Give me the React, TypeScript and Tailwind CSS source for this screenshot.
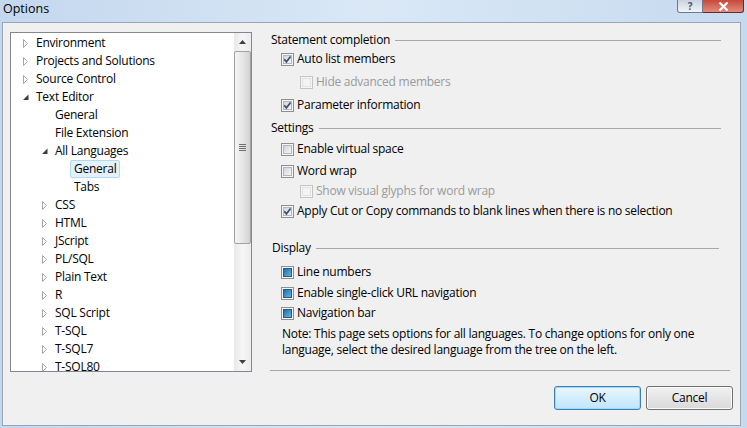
import React from "react";

type Node = { t: string; l: number; a?: "c" | "e"; sel?: boolean };

const tree: Node[] = [
  { t: "Environment", l: 0, a: "c" },
  { t: "Projects and Solutions", l: 0, a: "c" },
  { t: "Source Control", l: 0, a: "c" },
  { t: "Text Editor", l: 0, a: "e" },
  { t: "General", l: 1 },
  { t: "File Extension", l: 1 },
  { t: "All Languages", l: 1, a: "e" },
  { t: "General", l: 2, sel: true },
  { t: "Tabs", l: 2 },
  { t: "CSS", l: 1, a: "c" },
  { t: "HTML", l: 1, a: "c" },
  { t: "JScript", l: 1, a: "c" },
  { t: "PL/SQL", l: 1, a: "c" },
  { t: "Plain Text", l: 1, a: "c" },
  { t: "R", l: 1, a: "c" },
  { t: "SQL Script", l: 1, a: "c" },
  { t: "T-SQL", l: 1, a: "c" },
  { t: "T-SQL7", l: 1, a: "c" },
  { t: "T-SQL80", l: 1, a: "c" },
];

const padByLevel = ["pl-[12px]", "pl-[31px]", "pl-[50px]"];

function Arrow({ kind }: { kind?: "c" | "e" }) {
  if (kind === "c")
    return (
      <svg width="13" height="9" viewBox="0 0 13 9" className="shrink-0">
        <path d="M0.5 0.5 L4.5 4.5 L0.5 8.5 Z" fill="#fff" stroke="#a6a6a6" strokeWidth="1" />
      </svg>
    );
  if (kind === "e")
    return (
      <svg width="13" height="9" viewBox="0 0 13 9" className="shrink-0">
        <path d="M5.5 1.5 L5.5 7 L0 7 Z" fill="#3c3c3c" />
      </svg>
    );
  return <span className="w-[13px] shrink-0" />;
}

type CbKind = "checked" | "unchecked" | "disabled" | "indet";

function Checkbox({ kind }: { kind: CbKind }) {
  const id = React.useId().replace(/:/g, "");
  const disabled = kind === "disabled";
  return (
    <svg width="13" height="13" viewBox="0 0 13 13" className="shrink-0">
      <defs>
        <linearGradient id={"g" + id} x1="0" y1="0" x2="1" y2="1">
          <stop offset="0" stopColor="#cfd3d8" />
          <stop offset="1" stopColor="#f8f8f8" />
        </linearGradient>
        <linearGradient id={"b" + id} x1="0" y1="0" x2="1" y2="1">
          <stop offset="0" stopColor="#1d6aa5" />
          <stop offset="1" stopColor="#6bb8e4" />
        </linearGradient>
      </defs>
      <rect x="0.5" y="0.5" width="12" height="12" fill="#f6f6f6" stroke={disabled ? "#c4c4c4" : "#8e8f8f"} />
      {kind === "indet" ? (
        <rect x="2.5" y="2.5" width="8" height="8" fill={`url(#b${id})`} stroke="#1f5d8e" />
      ) : (
        <rect
          x="2.5"
          y="2.5"
          width="8"
          height="8"
          fill={disabled ? "#f4f4f4" : `url(#g${id})`}
          stroke={disabled ? "#e1e1e1" : "#b3b7bc"}
        />
      )}
      {kind === "checked" && (
        <path d="M3.3 6.3 L5.4 8.8 L9.6 3.4" fill="none" stroke="#3a4d7a" strokeWidth="1.7" />
      )}
    </svg>
  );
}

function Header({ text, extra }: { text: string; extra?: string }) {
  return (
    <div className={"flex h-[18px] items-center " + (extra ?? "")}>
      <span className="text-black">{text}</span>
      <div className="ml-[5px] h-px flex-1 bg-[#a8a8a8]" />
    </div>
  );
}

function CbRow({
  text,
  kind,
  indent,
  mt,
}: {
  text: string;
  kind: CbKind;
  indent?: boolean;
  mt: string;
}) {
  return (
    <div className={"flex h-[18px] items-center gap-[3px] " + (indent ? "pl-[30px] " : "pl-[11px] ") + mt}>
      <Checkbox kind={kind} />
      <span className={kind === "disabled" ? "text-[#9a9a9a]" : "text-black"}>{text}</span>
    </div>
  );
}

function Scrollbar() {
  return (
    <div className="flex h-full w-[17px] shrink-0 flex-col bg-gradient-to-r from-[#e9e9e9] via-[#f6f6f6] to-[#ececec]">
      <div className="flex h-[17px] items-center justify-center pt-[1px]">
        <svg width="7" height="4" viewBox="0 0 7 4">
          <path d="M3.5 0 L7 4 L0 4 Z" fill="#404040" />
        </svg>
      </div>
      <div className="mt-[1px] flex h-[193px] items-center justify-center rounded-[2px] border border-[#a2a2a2] bg-gradient-to-r from-[#f5f5f5] via-[#e6e6e6] to-[#d2d2d2]">
        <div className="flex flex-col gap-[1px]">
          <div className="h-px w-[7px] bg-[#6f6f6f]" />
          <div className="h-px w-[7px] bg-[#6f6f6f]" />
          <div className="h-px w-[7px] bg-[#6f6f6f]" />
          <div className="h-px w-[7px] bg-[#6f6f6f]" />
        </div>
      </div>
      <div className="flex-1" />
      <div className="flex h-[17px] items-center justify-center pb-[1px]">
        <svg width="7" height="4" viewBox="0 0 7 4">
          <path d="M0 0 L7 0 L3.5 4 Z" fill="#404040" />
        </svg>
      </div>
    </div>
  );
}

export default function App() {
  return (
    <div
      className="flex h-[428px] w-[747px] flex-col overflow-hidden bg-gradient-to-r from-[#c3d7ee] via-[#dae8f6] to-[#c6daef] text-[12px] leading-[16px] tracking-[-0.25px] text-black"
      style={{ fontFamily: '"Segoe UI", "Open Sans", "Noto Sans", sans-serif' }}
    >
      {/* Title bar */}
      <div className="flex h-[22px] shrink-0 items-start justify-between">
        <span className="pl-[3px] pt-[1px] text-[12.5px] leading-[16px] tracking-normal text-black">Options</span>
        <div className="mr-[3px] flex">
          <div className="flex h-[13px] w-[26px] items-center justify-center rounded-bl-[3px] border border-t-0 border-[#6d7b8c] bg-gradient-to-b from-[#c9d3de] to-[#f1f4f8] text-[10px] font-bold leading-[11px] text-[#4a5666]">
            ?
          </div>
          <div className="flex h-[13px] w-[41px] items-end justify-center rounded-br-[3px] border border-l-0 border-t-0 border-[#6b2b25] bg-gradient-to-b from-[#c5483c] to-[#e28a7a]">
            <svg width="11" height="9" viewBox="0 0 11 9" className="mb-[1px]">
              <path d="M1.5 0.5 L9.5 8.5 M9.5 0.5 L1.5 8.5" stroke="#fff" strokeWidth="2.2" />
            </svg>
          </div>
        </div>
      </div>

      {/* Client */}
      <div className="ml-[2px] flex h-[404px] w-[739px] shrink-0 border border-[#9aa6b4] bg-[#f0f0f0]">
        {/* Tree */}
        <div className="ml-[7px] mt-[9px] flex h-[340px] w-[242px] shrink-0 border border-[#828790] bg-white">
          <div className="flex-1 overflow-hidden pt-[1px]">
            {tree.map((n, i) => (
              <div key={i} className={"flex h-[18px] items-center " + padByLevel[n.l]}>
                <Arrow kind={n.a} />
                {n.sel ? (
                  <span className="-ml-[4px] flex h-[18px] items-center rounded-[2px] border border-[#b0daf4] bg-[#e2f1fb] px-[3px]">
                    {n.t}
                  </span>
                ) : (
                  <span className="whitespace-nowrap">{n.t}</span>
                )}
              </div>
            ))}
          </div>
          <Scrollbar />
        </div>

        {/* Right column */}
        <div className="ml-[18px] flex w-[463px] shrink-0 flex-col pt-[8px]">
          <div className="pr-[12px]">
            <Header text="Statement completion" extra="pl-[1px]" />
            <CbRow text="Auto list members" kind="checked" mt="mt-[1px]" />
            <CbRow text="Hide advanced members" kind="disabled" indent mt="mt-[5px]" />
            <CbRow text="Parameter information" kind="checked" mt="mt-[5px]" />
            <Header text="Settings" extra="pl-[1px] mt-[5px]" />
            <CbRow text="Enable virtual space" kind="unchecked" mt="mt-[3px]" />
            <CbRow text="Word wrap" kind="unchecked" mt="mt-[4px]" />
            <CbRow text="Show visual glyphs for word wrap" kind="disabled" indent mt="mt-[2px]" />
            <CbRow text="Apply Cut or Copy commands to blank lines when there is no selection" kind="checked" mt="mt-[2px]" />
            <div className="pr-[2px]">
              <Header text="Display" extra="pl-[2px] mt-[19px]" />
            </div>
            <CbRow text="Line numbers" kind="indet" mt="mt-[6px]" />
            <CbRow text="Enable single-click URL navigation" kind="indet" mt="mt-[3px]" />
            <CbRow text="Navigation bar" kind="indet" mt="mt-[2px]" />
            <div className="mt-[4px] pl-[12px] leading-[16px]">
              Note: This page sets options for all languages. To change options for only one
              <br />
              language, select the desired language from the tree on the left.
            </div>
          </div>
          <div className="mr-[3px] mt-[12px] h-px bg-[#a8a8a8]" />
          <div className="mt-[15px] flex justify-end gap-[5px]">
            <button className="flex h-[24px] w-[87px] items-center justify-center rounded-[3px] border border-[#3c7fb1] bg-gradient-to-b from-[#eaf6fd] to-[#bee6fd] text-black shadow-[inset_0_0_0_1px_#a4d6f5]">
              OK
            </button>
            <button className="flex h-[24px] w-[87px] items-center justify-center rounded-[3px] border border-[#707070] bg-gradient-to-b from-[#f2f2f2] to-[#d9d9d9] text-black shadow-[inset_0_0_0_1px_#fbfbfb]">
              Cancel
            </button>
          </div>
        </div>
      </div>
    </div>
  );
}
